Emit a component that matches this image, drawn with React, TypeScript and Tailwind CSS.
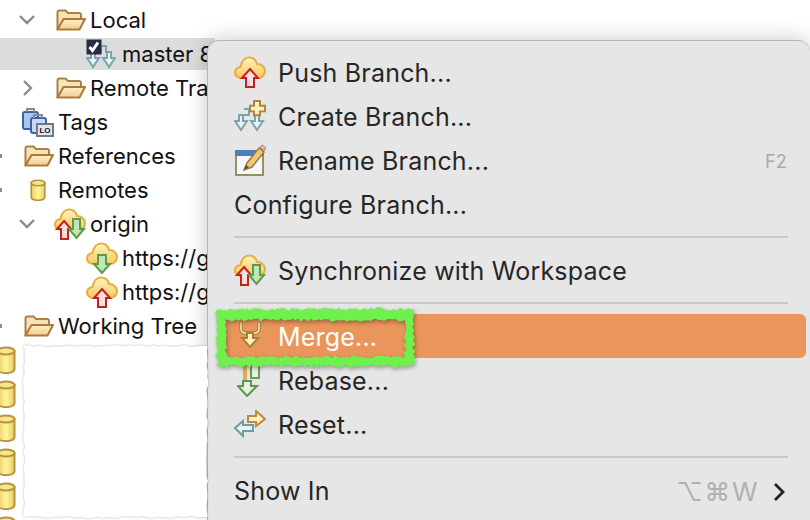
import type { ReactNode } from "react";

// deterministic rough outline for the torn panel and the marker highlight
function roughRect(x0: number, y0: number, x1: number, y1: number, step: number, amp: number, seed: number) {
  let s = seed;
  const rnd = () => {
    s = (s * 16807) % 2147483647;
    return (s / 2147483647 - 0.5) * 2 * amp;
  };
  const pts: string[] = [];
  for (let x = x0; x < x1; x += step) pts.push(`${x + rnd() / 2},${y0 + rnd()}`);
  for (let y = y0; y < y1; y += step) pts.push(`${x1 + rnd()},${y + rnd() / 2}`);
  for (let x = x1; x > x0; x -= step) pts.push(`${x + rnd() / 2},${y1 + rnd()}`);
  for (let y = y1; y > y0; y -= step) pts.push(`${x0 + rnd()},${y + rnd() / 2}`);
  return `M${pts.join("L")}Z`;
}

function Folder() {
  return (
    <svg width="30" height="22" viewBox="0 0 30 22" className="shrink-0">
      <defs>
        <linearGradient id="fold" x1="0" y1="0" x2="0" y2="1">
          <stop offset="0" stopColor="#fdf0cf" />
          <stop offset="1" stopColor="#f2cd8c" />
        </linearGradient>
      </defs>
      <path d="M1.5 20.5V3.5Q1.5 1.5 3.5 1.5H9.5L12 4H23Q25 4 25 6V10H8Z" fill="#f7e3b8" stroke="#ad8146" strokeWidth="2" strokeLinejoin="round" />
      <path d="M1.5 20.5L7.5 10H29L23.5 20.5Z" fill="url(#fold)" stroke="#ad7a3c" strokeWidth="2" strokeLinejoin="round" />
    </svg>
  );
}

function Cylinder({ w, h }: { w: number; h: number }) {
  return (
    <svg width={w} height={h} viewBox="0 0 20 28" preserveAspectRatio="none" className="shrink-0">
      <defs>
        <linearGradient id="cyl" x1="0" y1="0" x2="1" y2="0">
          <stop offset="0" stopColor="#e8cc62" />
          <stop offset="0.5" stopColor="#fdf59e" />
          <stop offset="1" stopColor="#e8cc62" />
        </linearGradient>
      </defs>
      <path d="M1.5 5V23C1.5 28.5 18.5 28.5 18.5 23V5Z" fill="url(#cyl)" stroke="#b8923c" strokeWidth="2" />
      <ellipse cx="10" cy="5" rx="8.5" ry="3.5" fill="#f6e58c" stroke="#b8923c" strokeWidth="2" />
    </svg>
  );
}

function Cloud({ up, down }: { up?: boolean; down?: boolean }) {
  const both = up && down;
  return (
    <svg width="32" height="32" viewBox="0 0 32 32" className="shrink-0">
      <defs>
        <linearGradient id="cloud" x1="0" y1="0" x2="0" y2="1">
          <stop offset="0" stopColor="#fff3c4" />
          <stop offset="1" stopColor="#f9c95c" />
        </linearGradient>
      </defs>
      <path d="M7 22C3 22 1 19 1 16.5C1 13.5 3.5 11.5 6.5 11C7.5 5 11 1.5 15 1.5C19 1.5 22 4 23 8C28 8 31 11.5 31 15C31 19 28 22 24 22Z" fill="url(#cloud)" stroke="#e8ae3c" strokeWidth="2" />
      {up && (
        <polygon
          points={both ? "10,13 17,21 14,21 14,31 7,31 7,21 3,21" : "16,13 24,22 20,22 20,31 12,31 12,22 8,22"}
          fill="#fbdede"
          stroke="#c4201c"
          strokeWidth="2"
        />
      )}
      {down && (
        <polygon
          points={both ? "19,11 26,11 26,21 30,21 22.5,30 15,21 19,21" : "12,13 20,13 20,22 24,22 16,31 8,22 12,22"}
          fill="#bfe6b4"
          stroke="#5c9a50"
          strokeWidth="2"
        />
      )}
    </svg>
  );
}

function BranchArrows() {
  return (
    <>
      <path d="M10 4H15V10H5" fill="none" stroke="#7ba4ac" strokeWidth="2" />
      <path d="M15 4H20V10H25" fill="none" stroke="#7ba4ac" strokeWidth="2" />
      <polygon points="5,10 9,10 9,16 13,16 7,25 1,16 5,16" fill="#e6f3f5" stroke="#7ba4ac" strokeWidth="2" />
      <polygon points="21,10 25,10 25,16 29,16 23,25 17,16 21,16" fill="#e6f3f5" stroke="#7ba4ac" strokeWidth="2" />
    </>
  );
}

function MasterIcon() {
  return (
    <svg width="30" height="30" viewBox="0 0 30 30" className="shrink-0">
      <g transform="translate(0 3)">
        <BranchArrows />
      </g>
      <rect x="0.5" y="0.5" width="15" height="15" fill="#252a45" />
      <path d="M3.5 8L6.5 11.5L12 3.5" fill="none" stroke="#fff" strokeWidth="3" />
    </svg>
  );
}

function CreateIcon() {
  return (
    <svg width="32" height="32" viewBox="0 0 32 32" className="shrink-0">
      <g transform="translate(0 5)">
        <BranchArrows />
      </g>
      <path d="M21 1H27V6H32V12H27V16H21V12H17V6H21Z" fill="#fdf0c0" stroke="#ad8540" strokeWidth="2" transform="translate(-1 0) scale(1 0.95)" />
    </svg>
  );
}

function RenameIcon() {
  return (
    <svg width="32" height="32" viewBox="0 0 32 32" className="shrink-0">
      <rect x="2" y="7" width="27" height="24" fill="#f4f8fd" stroke="#94905f" strokeWidth="2" />
      <rect x="1" y="6" width="29" height="6" fill="#4c80b6" />
      <polygon points="10,26 13,19 25,4 30,8 18,23" fill="#f2c878" stroke="#a07a3c" strokeWidth="1.5" />
      <polygon points="26,3 28,1 32,4 30,7" fill="#eeb0a8" stroke="#a88070" strokeWidth="1" />
      <polygon points="10,26 12,21 15,23" fill="#5a4a30" />
    </svg>
  );
}

function MergeIcon() {
  return (
    <svg width="24" height="26" viewBox="0 0 24 26" className="shrink-0">
      <path d="M3 0V6Q3 10 8 10H16Q21 10 21 6V0" fill="none" stroke="#a88038" strokeWidth="3.6" />
      <path d="M3 0V6Q3 10 8 10H16Q21 10 21 6V0" fill="none" stroke="#fff0c4" strokeWidth="1.4" />
      <polygon points="9,10 15,10 15,15 20,15 12,24 4,15 9,15" fill="#fff0c4" stroke="#a88038" strokeWidth="2" />
    </svg>
  );
}

function RebaseIcon() {
  return (
    <svg width="24" height="34" viewBox="0 0 24 34" className="shrink-0">
      <path d="M8 0V20" stroke="#e0ae4c" strokeWidth="4" fill="none" />
      <path d="M14 0V15H22V0" stroke="#6b9c5c" strokeWidth="2" fill="#e8f4e0" />
      <polygon points="6,18 14,18 14,23 20,23 10,33 1,23 6,23" fill="#e4f4dc" stroke="#5f9650" strokeWidth="2" />
    </svg>
  );
}

function ResetIcon() {
  return (
    <svg width="32" height="28" viewBox="0 0 32 28" className="shrink-0">
      <polygon points="14,6 22,6 22,1 31,9 22,16 22,12 14,12" fill="#fdf0c8" stroke="#bd8a38" strokeWidth="2" />
      <polygon points="1,18 9,11 9,15 19,15 19,21 9,21 9,26" fill="#e6f3f5" stroke="#6f9aa4" strokeWidth="2" />
    </svg>
  );
}

function TagsIcon() {
  return (
    <svg width="32" height="30" viewBox="0 0 32 30" className="shrink-0">
      <rect x="1" y="5" width="15" height="17" rx="2" fill="#a9c8ec" stroke="#3f5fa8" strokeWidth="2" />
      <path d="M5 5V2H12V5" fill="none" stroke="#8a8a8a" strokeWidth="2" />
      <rect x="9" y="11" width="15" height="15" rx="2" fill="#c4dcf4" stroke="#3f5fa8" strokeWidth="2" />
      <path d="M12 11V8H20V11" fill="none" stroke="#8a8a8a" strokeWidth="2" />
      <rect x="15" y="17" width="16" height="12" fill="#dfe6ee" stroke="#73797f" strokeWidth="2" />
      <text x="23" y="26" textAnchor="middle" fontSize="8" fontWeight="700" fill="#111" fontFamily="Liberation Sans, sans-serif">LO</text>
    </svg>
  );
}

function Chevron({ open }: { open?: boolean }) {
  return (
    <svg width="18" height="18" viewBox="0 0 18 18" className="shrink-0">
      <path d={open ? "M2 5L9 12L16 5" : "M5 2L12 9L5 16"} fill="none" stroke="#8a8a8a" strokeWidth="2.4" />
    </svg>
  );
}

function TreeRow({ className, children, selected }: { className: string; children: ReactNode; selected?: boolean }) {
  return (
    <div className={`flex w-[215px] items-center whitespace-nowrap text-[22px] text-[#111] ${selected ? "my-[1px] h-[32px] bg-[#dcdcdc]" : "h-[34px]"} ${className}`}>
      {children}
    </div>
  );
}

function TreeLabel({ className, text }: { className: string; text: string }) {
  return <span className={`pt-[1px] ${className}`}>{text}</span>;
}

function EdgeMark() {
  return <div className="absolute left-0 h-[4px] w-[2px] bg-[#8a8a8a]" />;
}

function MenuItem({ icon, label, right, active }: { icon?: ReactNode; label: string; right?: ReactNode; active?: boolean }) {
  return (
    <div className={`ml-[13px] mr-[4px] flex h-[44px] items-center rounded-[6px] pl-[13px] text-[25px] tracking-[0.2px] ${active ? "bg-[#ea955b] text-white" : "text-[#262626]"}`}>
      {icon && <div className="flex w-[44px] shrink-0 items-center">{icon}</div>}
      <span className="pt-[4px]">{label}</span>
      {right && <div className="ml-auto flex items-center pr-[19px]">{right}</div>}
    </div>
  );
}

function MenuSep() {
  return (
    <div className="ml-[26px] mr-[22px] flex h-[22px] items-center">
      <div className="h-[2px] w-full bg-[#c9c9c9]" />
    </div>
  );
}

export default function App() {
  return (
    <div className="relative h-[520px] w-[810px] overflow-hidden bg-white font-['Inter','Liberation_Sans',sans-serif]">
      <div className="w-[230px] pt-[3px]">
        <TreeRow className="pl-[18px]">
          <div className="w-[38px] shrink-0"><Chevron open /></div>
          <Folder />
          <TreeLabel className="ml-[4px]" text="Local" />
        </TreeRow>
        <TreeRow className="pl-[86px]" selected>
          <MasterIcon />
          <TreeLabel className="ml-[6px]" text="master 8" />
        </TreeRow>
        <TreeRow className="pl-[19px]">
          <div className="w-[37px] shrink-0"><Chevron /></div>
          <Folder />
          <TreeLabel className="ml-[4px]" text="Remote Tra" />
        </TreeRow>
        <TreeRow className="pl-[22px]">
          <TagsIcon />
          <TreeLabel className="ml-[4px]" text="Tags" />
        </TreeRow>
        <TreeRow className="relative pl-[24px]">
          <EdgeMark />
          <Folder />
          <TreeLabel className="ml-[4px]" text="References" />
        </TreeRow>
        <TreeRow className="relative pl-[30px]">
          <EdgeMark />
          <Cylinder w={16} h={22} />
          <TreeLabel className="ml-[12px]" text="Remotes" />
        </TreeRow>
        <TreeRow className="pl-[18px]">
          <div className="w-[36px] shrink-0"><Chevron open /></div>
          <Cloud up down />
          <TreeLabel className="ml-[4px]" text="origin" />
        </TreeRow>
        <TreeRow className="pl-[86px]">
          <Cloud down />
          <TreeLabel className="ml-[4px]" text="https://g" />
        </TreeRow>
        <TreeRow className="pl-[86px]">
          <Cloud up />
          <TreeLabel className="ml-[4px]" text="https://g" />
        </TreeRow>
        <TreeRow className="relative pl-[24px]">
          <EdgeMark />
          <Folder />
          <TreeLabel className="ml-[4px]" text="Working Tree" />
        </TreeRow>
        <div className="flex">
          <div className="ml-[-4px] flex w-[27px] shrink-0 flex-col">
            {[0, 1, 2, 3, 4, 5].map((i) => (
              <div key={i} className="flex h-[34px] items-center">
                <Cylinder w={20} h={28} />
              </div>
            ))}
          </div>
          {/* redacted area, torn paper look */}
          <div className="relative z-20 mt-[2px] h-[173px] w-[185px]">
            <svg width="185" height="173" viewBox="0 0 185 173" className="overflow-visible drop-shadow-[0_0_1px_rgba(0,0,0,0.3)]">
              <path d={roughRect(1, 1, 184, 172, 5, 1.1, 77)} fill="#fff" />
            </svg>
          </div>
        </div>
      </div>

      {/* context menu */}
      <div className="absolute bottom-0 left-[207px] right-0 top-[40px] z-10 rounded-t-[12px] border-l border-t border-[#b4b4b4] bg-[#e6e6e6] pt-[9px] shadow-[0_0_22px_rgba(0,0,0,0.22)]">
        <MenuItem icon={<Cloud up />} label="Push Branch..." />
        <MenuItem icon={<CreateIcon />} label="Create Branch..." />
        <MenuItem icon={<RenameIcon />} label="Rename Branch..." right={<span className="pt-[2px] text-[18px] text-[#a9a9a9]">F2</span>} />
        <MenuItem label="Configure Branch..." />
        <MenuSep />
        <MenuItem icon={<Cloud up down />} label="Synchronize with Workspace" />
        <MenuSep />
        <MenuItem icon={<div className="pl-[4px]"><MergeIcon /></div>} label="Merge..." active />
        <MenuItem icon={<div className="pl-[3px]"><RebaseIcon /></div>} label="Rebase..." />
        <MenuItem icon={<ResetIcon />} label="Reset..." />
        <MenuSep />
        <MenuItem
          label="Show In"
          right={
            <div className="flex items-center pt-[3px]">
              <span className="text-[26px] tracking-[1.5px] text-[#b0b0b0]">⌥⌘W</span>
              <svg width="12" height="20" viewBox="0 0 12 20" className="ml-[14px] mr-[2px]">
                <path d="M2 2L10 10L2 18" fill="none" stroke="#222" strokeWidth="2.8" />
              </svg>
            </div>
          }
        />
      </div>

      {/* green marker around the Merge item */}
      <svg
        width="210"
        height="72"
        viewBox="0 0 210 72"
        className="pointer-events-none absolute left-[212px] top-[303px] z-30 drop-shadow-[1px_2px_2px_rgba(0,0,0,0.35)]"
      >
        <path
          d={`${roughRect(5, 6, 202, 63, 2.5, 1.8, 4242)} ${roughRect(14, 17, 193, 54, 2.5, 1.5, 991)}`}
          fill="#6ff04c"
          fillRule="evenodd"
        />
      </svg>
    </div>
  );
}
